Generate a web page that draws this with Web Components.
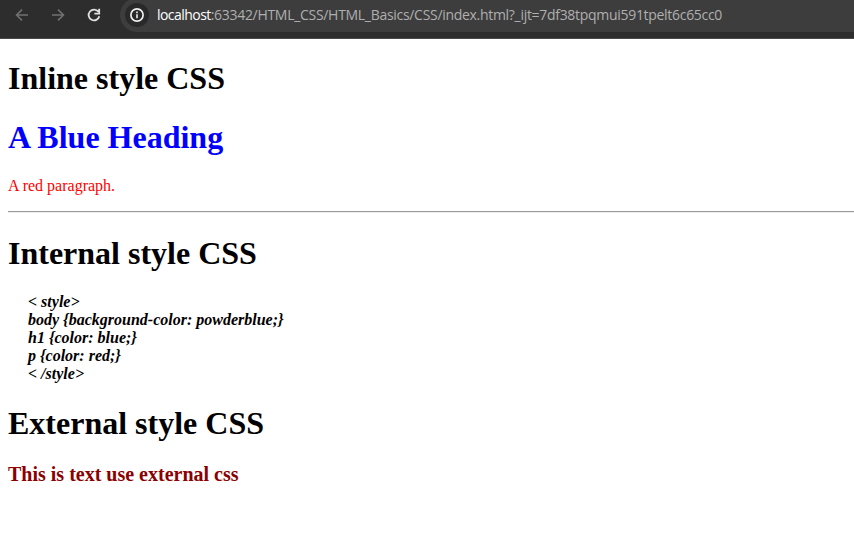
<!DOCTYPE html>
<html lang="en">
<head>
<meta charset="utf-8">
<title>CSS basics</title>
<style>
html, body { margin: 0; height: 100%; overflow: hidden; background: #fff; }
body { font-family: "Liberation Serif", "Times New Roman", serif; font-size: 16px; color: #000; }
</style>
</head>
<body>
<browser-bar><span slot="host">localhost</span><span slot="rest">:63342/HTML_CSS/HTML_Basics/CSS/index.html?_ijt=7df38tpqmui591tpelt6c65cc0</span></browser-bar>
<page-view>
  <page-title>Inline style CSS</page-title>
  <page-title style="color:blue">A Blue Heading</page-title>
  <text-line style="color:red">A red paragraph.</text-line>
  <page-rule></page-rule>
  <page-title>Internal style CSS</page-title>
  <code-note>&lt; style&gt;
body {background-color: powderblue;}
h1 {color: blue;}
p {color: red;}
&lt; /style&gt;</code-note>
  <page-title>External style CSS</page-title>
  <sub-title>This is text use external css</sub-title>
</page-view>
<script>
const define = (name, html) => customElements.define(name, class extends HTMLElement {
  constructor() {
    super();
    this.attachShadow({ mode: 'open' }).innerHTML = html;
  }
});

define('browser-bar', `
<style>
:host { display: flex; box-sizing: border-box; height: 39px; background: #2d2d2d; border-bottom: 1px solid #4b4849; overflow: hidden; }
nav { display: flex; width: 120px; height: 30px; box-sizing: border-box; padding-left: 14px; gap: 20px; align-items: center; flex: none; }
svg { display: block; width: 16px; height: 16px; flex: none; fill: none; stroke: #707070; stroke-width: 1.6; }
.reload { stroke: #e0e0e0; stroke-width: 1.8; }
.field { flex: 1; display: flex; align-items: center; height: 34px; margin-top: -2px; padding-left: 5px; border-radius: 17px 0 0 17px; background: #3d3d3d; box-sizing: border-box; }
.info { width: 24px; height: 24px; border-radius: 50%; background: #292929; display: grid; place-items: center; flex: none; }
.info svg { stroke: #eee; }
.url { margin-left: 8px; white-space: nowrap; font: 14px/20px "Open Sans", "Noto Sans", sans-serif; color: #afafaf; letter-spacing: -0.3px; }
.host { color: #fff; letter-spacing: -0.55px; }
</style>
<nav>
  <svg viewBox="0 0 16 16"><path d="M14 8H3M8 2.6 2.6 8 8 13.4"/></svg>
  <svg viewBox="0 0 16 16"><path d="M2 8h11M8 2.6 13.4 8 8 13.4"/></svg>
  <svg class="reload" viewBox="0 0 16 16"><path d="M12.4 4.8A5.4 5.4 0 1 0 13.3 9.2M13.2 1.8v4.9H8.4"/></svg>
</nav>
<div class="field">
  <div class="info"><svg viewBox="0 0 16 16"><circle cx="8" cy="8" r="6.1" stroke-width="1.7"/><path d="M8 7.2v4M8 4.6v1.6"/></svg></div>
  <div class="url"><span class="host"><slot name="host"></slot></span><slot name="rest"></slot></div>
</div>`);

define('page-view', `<style>:host { display: block; width: 862px; box-sizing: border-box; padding: 0 8px; } </style><slot></slot>`);
define('page-title', `<style>:host { display: block; margin: 21.44px 0; } h1 { margin: 0; font-size: 32px; line-height: 37px; font-weight: bold; }</style><h1><slot></slot></h1>`);
define('text-line', `<style>:host { display: block; margin: 16px 0; } p { margin: 0; line-height: 18px; }</style><p><slot></slot></p>`);
define('page-rule', `<style>:host { display: block; height: 2px; width: 100%; box-sizing: border-box; border-top: 1px solid #9a9a9a; border-bottom: 1px solid #eee; }</style>`);
define('code-note', `<style>:host { display: block; padding-left: 20px; white-space: pre-line; font-weight: bold; font-style: italic; line-height: 18px; }</style><slot></slot>`);
define('sub-title', `<style>:host { display: block; } h3 { margin: 0; font-size: 20px; line-height: 23px; color: #8b0000; }</style><h3><slot></slot></h3>`);
</script>
</body>
</html>
